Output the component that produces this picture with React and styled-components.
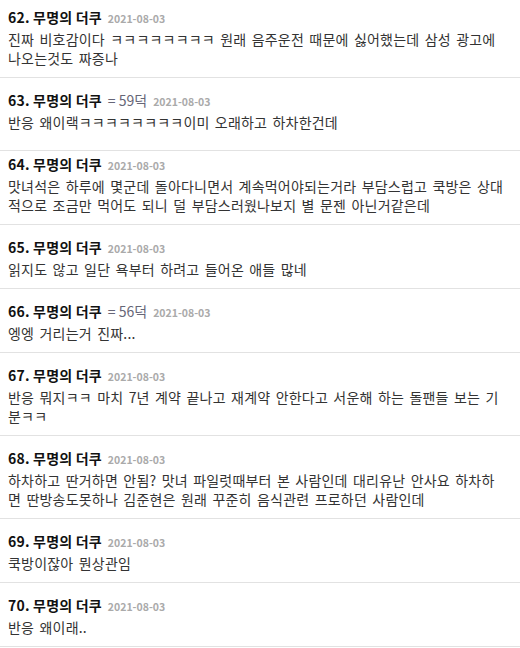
import styled, { createGlobalStyle } from "styled-components";

const Global = createGlobalStyle`
  html, body {
    margin: 0;
    padding: 0;
    background: #fff;
  }
  body {
    font-family: "Noto Sans CJK KR", "Noto Sans", sans-serif;
    overflow: hidden;
  }
`;

const List = styled.ul`
  list-style: none;
  margin: -5px 0 0;
  padding: 0;
`;

const Item = styled.li`
  border-bottom: 1px solid #e2e2e2;
  padding: ${(p) => p.$top ?? 12}px 4px ${(p) => p.$bottom ?? 9}px 8px;
`;

const Head = styled.div`
  display: flex;
  align-items: baseline;
  gap: 6px;
  height: 20px;
  line-height: 20px;
  margin-bottom: 3px;
  white-space: nowrap;
`;

const Name = styled.span`
  font-size: 14px;
  font-weight: 700;
  color: #111;
  letter-spacing: 0.2px;
`;

const Duk = styled.span`
  font-size: 14px;
  color: #667;
`;

const Date = styled.span`
  font-size: 10.5px;
  font-weight: 700;
  color: #aaa;
`;

const Body = styled.div`
  font-size: 14px;
  line-height: 19px;
  color: #333;
  letter-spacing: 0.2px;
  word-spacing: 2px;
`;

const Line = styled.span`
  display: block;
  height: 19px;
  white-space: nowrap;
`;

const comments = [
  {
    no: 62,
    lines: ["진짜 비호감이다 ㅋㅋㅋㅋㅋㅋㅋㅋ 원래 음주운전 때문에 싫어했는데 삼성 광고에", "나오는것도 짜증나"],
  },
  {
    no: 63,
    duk: 59,
    lines: ["반응 왜이랙ㅋㅋㅋㅋㅋㅋㅋㅋ이미 오래하고 하차한건데"],
    bottom: 18,
  },
  {
    no: 64,
    lines: [
      "맛녀석은 하루에 몇군데 돌아다니면서 계속먹어야되는거라 부담스럽고 쿡방은 상대",
      "적으로 조금만 먹어도 되니 덜 부담스러웠나보지 별 문젠 아닌거같은데",
    ],
    top: 3,
  },
  { no: 65, lines: ["읽지도 않고 일단 욕부터 하려고 들어온 애들 많네"] },
  { no: 66, duk: 56, lines: ["엥엥 거리는거 진짜..."] },
  {
    no: 67,
    lines: ["반응 뭐지ㅋㅋ 마치 7년 계약 끝나고 재계약 안한다고 서운해 하는 돌팬들 보는 기", "분ㅋㅋ"],
  },
  {
    no: 68,
    lines: [
      "하차하고 딴거하면 안됨? 맛녀 파일럿때부터 본 사람인데 대리유난 안사요 하차하",
      "면 딴방송도못하나 김준현은 원래 꾸준히 음식관련 프로하던 사람인데",
    ],
  },
  { no: 69, lines: ["쿡방이잖아 뭔상관임"] },
  { no: 70, lines: ["반응 왜이래.."] },
];

export default function App() {
  return (
    <>
      <Global />
      <List>
        {comments.map((c) => (
          <Item key={c.no} $top={c.top} $bottom={c.bottom}>
            <Head>
              <Name>{c.no}. 무명의 더쿠</Name>
              {c.duk && <Duk>= {c.duk}덕</Duk>}
              <Date>2021-08-03</Date>
            </Head>
            <Body>
              {c.lines.map((l, i) => (
                <Line key={i}>{l}</Line>
              ))}
            </Body>
          </Item>
        ))}
      </List>
    </>
  );
}
